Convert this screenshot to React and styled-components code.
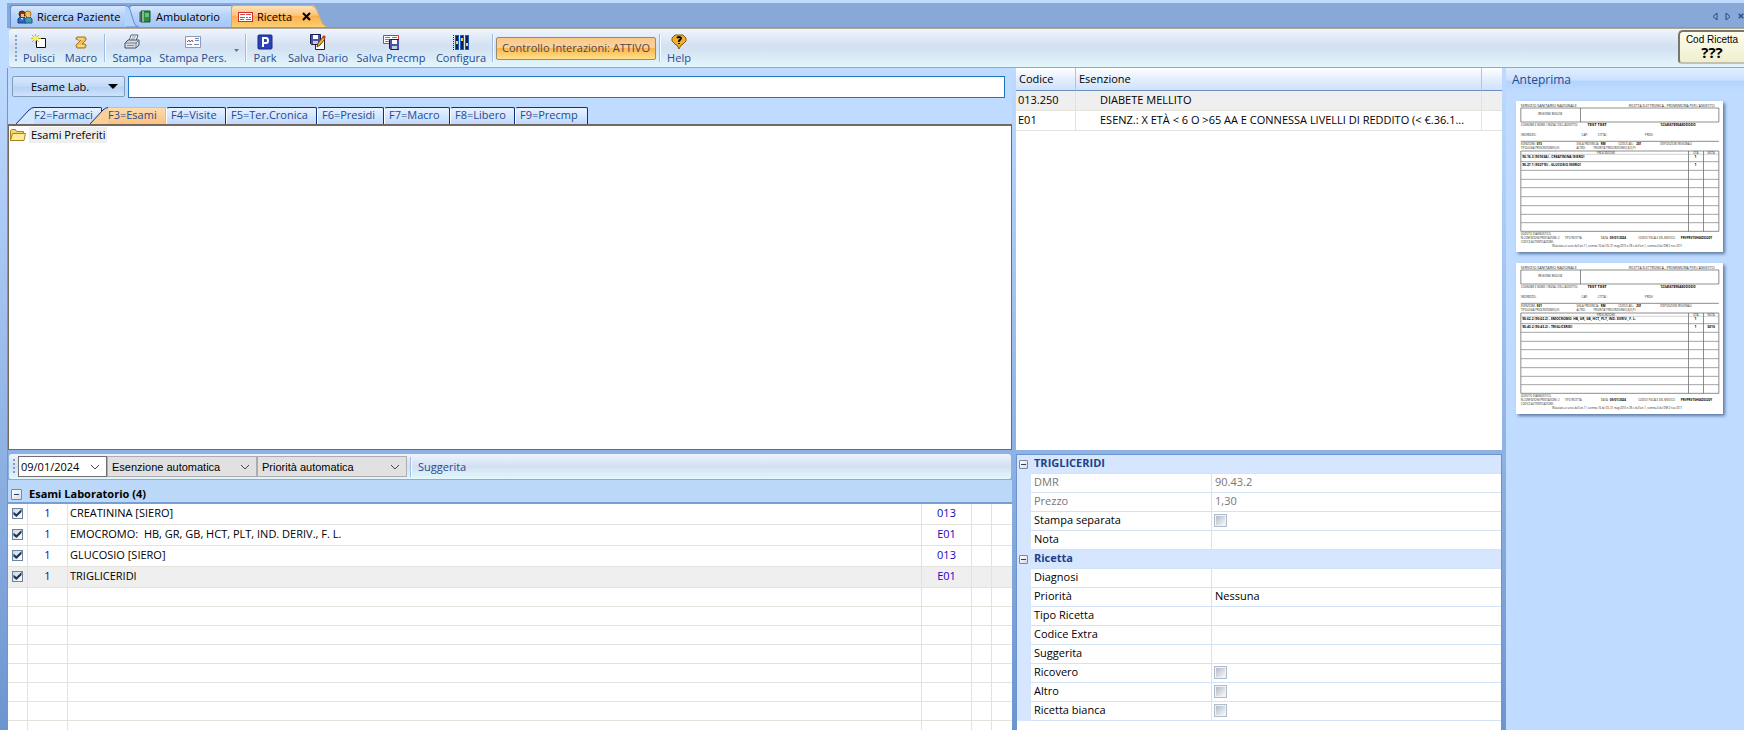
import React, { useState } from "react";
import styled, { createGlobalStyle } from "styled-components";

const GlobalStyle = createGlobalStyle`
  * {
    box-sizing: border-box;
  }

  body {
    margin: 0;
    background: #bfdbff;
    color: #000;
    font-family: "Open Sans", "Noto Sans", sans-serif;
    font-size: 11px;
    line-height: 16px;
  }

  button, input, select {
    font: inherit;
    color: inherit;
    margin: 0;
  }

  button {
    padding: 0;
    border: 0;
    background: none;
    white-space: nowrap;
  }
`;

const Page = styled.div`
  display: flex;
  flex-direction: column;
  height: 100vh;
  overflow: hidden;
  padding-left: 7px;
  background: linear-gradient(#bfdbff 60px, #8fb2e4 450px, #6c95cf);
`;

const TabStrip = styled.div`
  display: flex;
  align-items: flex-end;
  height: 25px;
  flex: none;
  margin-top: 3px;
  padding-left: 3px;
  background: #88a9d8;
  border-bottom: 1px solid #6f9bd8;
`;

const WindowTab = styled.button`
  display: flex;
  align-items: center;
  gap: 4px;
  height: 22px;
  width: ${({ $width }) => $width}px;
  padding-left: ${({ $indent }) => $indent || 6}px;
  border: 1px solid ${({ $active }) => ($active ? "#c6ab7c" : "#5f8cca")};
  border-right: 0;
  border-bottom: 0;
  border-radius: 3px 0 0 0;
  background: ${({ $active }) =>
    $active
      ? "linear-gradient(#fde3b8, #fcc47c 45%, #fbaf4e 50%, #fdd06f)"
      : "linear-gradient(#d5e6fd, #b3d1fb 50%, #a5c8fa)"};
`;

const TabEdge = styled.svg`
  display: block;
  flex: none;
  position: relative;
  z-index: 1;
  margin-right: ${({ $overlap }) => -$overlap}px;
`;

const TabClose = styled.span`
  margin-left: 6px;
  line-height: 0;
`;

const StripButtons = styled.div`
  display: flex;
  gap: 7px;
  align-items: center;
  height: 22px;
  margin-left: auto;

  button {
    line-height: 0;
  }
`;

const Toolbar = styled.div`
  display: flex;
  align-items: center;
  flex: none;
  height: 40px;
  padding-left: 6px;
  margin-left: 2px;
  border-top: 1px solid #b3a99b;
  border-bottom: 1px solid #78b1dd;
  border-radius: 3px 0 0 3px;
  background: linear-gradient(#f0f5fd, #d3e0f2 45%, #d5e5f4 60%, #e4f6fc);
  color: #254a92;
`;

const Grip = styled.div`
  width: 2px;
  height: ${({ $height }) => $height}px;
  flex: none;
  background: repeating-linear-gradient(#7f9fd4 0 2px, transparent 2px 4px);
`;

const ToolButton = styled.button`
  display: flex;
  flex-direction: column;
  align-items: center;
  gap: 1px;
  width: ${({ $width }) => $width}px;
  padding-top: 2px;
  line-height: 14px;
`;

const Divider = styled.div`
  width: 1px;
  height: ${({ $height }) => $height}px;
  margin-left: ${({ $space }) => $space || 0}px;
  flex: none;
  background: #9dbce6;
  box-shadow: 1px 0 #f5faff;
`;

const MenuArrow = styled.button`
  width: 18px;
  height: 28px;
`;

const ToggleButton = styled.button`
  height: 23px;
  width: 160px;
  margin: 0 3px;
  border: 1px solid #9c8a69;
  border-radius: 2px;
  background: linear-gradient(#f8c887, #fdd299 45%, #fcb64f 50%, #fee08b);
  color: #4b4654;
`;

const CodeBox = styled.button`
  align-self: flex-start;
  display: flex;
  flex-direction: column;
  align-items: center;
  width: 66px;
  height: 34px;
  margin-top: 1px;
  margin-left: auto;
  padding-top: 1px;
  border: 2px solid #77776b;
  border-right: 0;
  border-bottom-color: #c2c2ae;
  border-radius: 5px 0 0 4px;
  background: linear-gradient(#fdfdec, #efefcf);
  color: #000;
  font-family: "Liberation Sans", Arial, sans-serif;
  font-size: 10px;
  line-height: 13px;
`;

const CodeValue = styled.strong`
  font-family: "Open Sans", sans-serif;
  font-size: 15px;
`;

const Columns = styled.div`
  display: grid;
  grid-template-columns: minmax(0, 1fr) 486px 238px;
  column-gap: 4px;
  flex: 1;
  min-height: 0;
  border-left: 1px solid #8a91a5;
`;

const Column = styled.div`
  display: flex;
  flex-direction: column;
  min-height: 0;
  min-width: 0;
`;

const SearchArea = styled.div`
  background: #bfdbff;
  flex: none;
`;

const SearchRow = styled.div`
  display: flex;
  gap: 3px;
  padding: 8px 7px 9px 4px;
`;

const TypeButton = styled.button`
  display: flex;
  align-items: center;
  justify-content: space-between;
  width: 113px;
  height: 21px;
  padding: 0 6px 0 18px;
  border: 1px solid #7f9db9;
  border-radius: 2px;
  background: linear-gradient(#d8e8fc, #c2daf8 50%, #b7d2f5 55%, #cfe2fa);
`;

const SearchInput = styled.input`
  flex: 1;
  height: 22px;
  min-width: 0;
  padding: 0 3px;
  border: 1px solid #2077bd;
  background: #fff;
  outline: 0;
`;

const CategoryTabs = styled.div`
  display: flex;
  height: 17px;
  padding-left: 8px;
`;

const CategoryTab = styled.button`
  width: ${({ $width }) => $width}px;
  height: 17px;
  padding-left: ${({ $slanted }) => ($slanted ? 0 : 4)}px;
  padding-bottom: 2px;
  text-align: left;
  line-height: 14px;
  border: 1px solid ${({ $active }) => ($active ? "#e9b87a" : "#0d2f86")};
  border-left: ${({ $slanted }) => ($slanted ? "0" : "1px solid #fff")};
  border-bottom: 0;
  border-radius: ${({ $slanted }) => ($slanted ? "0 2px 0 0" : "3px 2px 0 0")};
  background: ${({ $active }) =>
    $active ? "linear-gradient(#fbdcae, #fbc27d)" : "linear-gradient(#eaf3ff, #bed9fe)"};
  color: #254a92;
`;

const Slant = styled.svg`
  display: block;
  flex: none;
  position: relative;
  margin-left: ${({ $overlap }) => -$overlap}px;
`;

const Tree = styled.div`
  flex: none;
  height: 326px;
  padding: 0 1px;
  border: 1px solid #75685f;
  border-top-width: 2px;
  background: #fff;
`;

const TreeItem = styled.button`
  display: flex;
  align-items: center;
  gap: 3px;
  height: 18px;
`;

const TreeLabel = styled.span`
  padding: 0 2px;
  background: #efefef;
`;

const FilterBar = styled.div`
  display: flex;
  align-items: center;
  flex: none;
  height: 26px;
  margin: 4px 1px 0;
  padding-left: 4px;
  border-bottom: 1px solid #7fb1dd;
  border-radius: 3px;
  background: linear-gradient(#eef4fd, #d3e0f2 50%, #e2f8fc);
`;

const Field = styled.label`
  display: grid;
  grid-template-columns: 1fr 16px;
  align-items: center;
  width: ${({ $width }) => $width}px;
  height: 21px;
  margin-left: ${({ $indent }) => ($indent ? 3 : 0)}px;
  border: 1px solid ${({ $white }) => ($white ? "#6f6f6f" : "#adadad")};
  background: ${({ $white }) => ($white ? "#fff" : "#e1e1e1")};

  input, select {
    grid-area: 1 / 1 / 2 / 3;
    width: 100%;
    height: 19px;
    padding: 0 ${({ $white }) => ($white ? 2 : 4)}px;
    border: 0;
    outline: 0;
    background: none;
    appearance: none;
    font-family: ${({ $white }) => ($white ? "inherit" : '"Liberation Sans", Arial, sans-serif')};
  }

  svg {
    grid-area: 1 / 2 / 2 / 3;
    pointer-events: none;
  }
`;

const TextButton = styled.button`
  padding: 0 7px;
  color: #254a92;
`;

const GroupHeader = styled.div`
  display: flex;
  align-items: center;
  gap: 7px;
  flex: none;
  height: 24px;
  padding: 6px 0 0 3px;
  border-bottom: 2px solid #769fd5;
  background: #bbd8f9;
  font-weight: bold;
`;

const Scroller = styled.div`
  flex: 1;
  min-height: 0;
  overflow: hidden;
  background: #fff;
`;

const ExamTable = styled.table`
  width: 100%;
  table-layout: fixed;
  border-collapse: separate;
  border-spacing: 0;

  td {
    height: 19px;
    padding: 0 2px;
    line-height: 16px;
    border-right: 1px solid #e3e3dc;
    border-bottom: 1px solid #e3e3dc;
    white-space: pre;
  }

  td:last-child {
    border-right: 0;
  }
`;

const ExamRow = styled.tr`
  background: ${({ $selected }) => ($selected ? "#efefef" : "#fff")};

  && td {
    height: 21px;
    padding-bottom: 2px;
  }
`;

const BlueCell = styled.td`
  color: #1404c4;
  text-align: center;
`;

const Check = styled.input`
  appearance: none;
  display: block;
  width: ${({ $large }) => ($large ? 13 : 11)}px;
  height: ${({ $large }) => ($large ? 13 : 11)}px;
  border: 1px solid ${({ $large }) => ($large ? "#aebccd" : "#6b84a0")};
  background: ${({ $large }) =>
    $large
      ? "linear-gradient(135deg, #b4bac5, #f7f8fa) content-box, #eef1f6"
      : "linear-gradient(135deg, #cdd5df, #fff)"};
  padding: ${({ $large }) => ($large ? 1 : 0)}px;
  margin: 0 0 0 ${({ $large }) => ($large ? -1 : 2)}px;

  &:checked::before {
    content: "";
    display: block;
    width: 9px;
    height: 9px;
    background: #1e3550;
    clip-path: polygon(5% 35%, 38% 60%, 95% 5%, 95% 40%, 38% 95%, 5% 68%);
  }
`;

const CodeTable = styled.table`
  width: 100%;
  table-layout: fixed;
  border-spacing: 0;

  th {
    height: 23px;
    padding: 0 3px;
    font-weight: normal;
    text-align: left;
    border-right: 1px solid #a9c6ea;
    border-bottom: 1px solid #6d90c4;
    background: linear-gradient(#fff, #e4effd 50%, #cfe2fb);
  }

  td {
    height: 20px;
    padding: 0 2px 2px;
    white-space: nowrap;
    border-right: 1px solid #e3e3dc;
    border-bottom: 1px solid #e3e3dc;
  }

  td + td {
    padding-left: 24px;
  }

  th:last-child, td:last-child {
    border-right: 0;
  }
`;

const CodeRow = styled.tr`
  background: ${({ $selected }) => ($selected ? "#efefef" : "#fff")};
`;

const CodePanel = styled.div`
  flex: none;
  height: 382px;
  overflow: hidden;
  background: #fff;
`;

const Properties = styled.div`
  flex: 1;
  min-height: 0;
  margin-top: 4px;
  overflow: hidden;
  border: 1px solid #6b93cf;
  border-bottom: 0;
  background: #fff;
`;

const PropertyTable = styled.table`
  width: 100%;
  table-layout: fixed;
  border-spacing: 0;

  th, td {
    height: 19px;
    padding: 0 3px 2px;
    text-align: left;
    font-weight: normal;
    border-bottom: 1px solid #d3e3f6;
  }

  td {
    border-left: 1px solid #d3e3f6;
  }
`;

const Gutter = styled.td`
  && {
    padding: 0 2px;
    border: 0;
    background: #d5e6fe;
  }
`;

const GroupCell = styled.th`
  && {
    background: #d5e6fe;
    color: #1d428a;
    font-weight: bold;
  }
`;

const PropertyRow = styled.tr`
  color: ${({ $readOnly }) => ($readOnly ? "#777" : "#000")};
`;

const Collapse = styled.button`
  display: block;
  width: ${({ $size }) => $size}px;
  height: ${({ $size }) => $size}px;
  border: 1px solid #7b8796;
  border-radius: 1px;
  background: linear-gradient(#26406e, #26406e) center / 5px 1px no-repeat,
    linear-gradient(135deg, #fff, #d5dce8);
`;

const Preview = styled.aside`
  background: #bfdbff;
`;

const PreviewTitle = styled.h2`
  height: 24px;
  margin: 0 0 9px;
  padding-left: 6px;
  color: #254a92;
  font-size: 12px;
  font-weight: normal;
  line-height: 24px;
  background: linear-gradient(#e0eeff, #cce1ff 50%, #b3d3fd 55%, #bfdbff);
`;

const Sheet = styled.svg`
  display: block;
  width: 207px;
  height: 151px;
  margin: 0 0 11px 10px;
  background: #fff;
  box-shadow: 2px 2px 3px #5d7ba5;
`;

const PatientsIcon = () => (
  <svg width="16" height="14" viewBox="0 0 16 14">
    <path d="M1 13V9l2-2h4l2 2v4z" fill="#2b6cc4" stroke="#143a7a" />
    <path d="M8 13V9l2-2h3l2 2v4z" fill="#3f9bb0" stroke="#1d5a68" />
    <circle cx="5" cy="4" r="3" fill="#7a3b16" stroke="#4a220d" />
    <circle cx="11" cy="4" r="3" fill="#f0c04a" stroke="#a86f12" />
    <path d="M4 4h3v3H4zM10 4h3v3h-3z" fill="#f3b98a" />
    <path d="M4 8l1 2 1-2z" fill="#fff" />
  </svg>
);

const BookIcon = () => (
  <svg width="14" height="14" viewBox="0 0 14 14">
    <path d="M3 1h9v11H3z" fill="#2f8c45" stroke="#175328" />
    <path d="M5 1v11" stroke="#c8f0cc" />
    <path d="M7 4h4M7 6h4" stroke="#b5e7bb" />
    <path d="M1 3h3M1 5h3M1 7h3M1 9h3M1 11h3" stroke="#444" />
  </svg>
);

const FormIcon = () => (
  <svg width="16" height="12" viewBox="0 0 16 12" shapeRendering="crispEdges">
    <path d="M.5 1.500h15v9H.5z" fill="#fff" stroke="#c9232b" />
    <path d="M2 3.500h5M9 3.500h5M2 6.500h5M9 6.500h2M12 6.500h2M2 8.500h4M9 8.500h5" stroke="#d83a40" />
  </svg>
);

const NewIcon = () => (
  <svg width="16" height="16" viewBox="0 0 16 16">
    <path d="M5.500 4.500h9v9h-9z" fill="#fff" stroke="#111" />
    <path d="M4.500 0v10M0 4.500h10M1 1l7 7M8 1L1 8" stroke="#c5b61b" />
    <path d="M4.500 2v5M2 4.500h5" stroke="#fff34a" strokeWidth="2" />
  </svg>
);

const ScrollIcon = () => (
  <svg width="14" height="16" viewBox="0 0 14 16">
    <path d="M3 3h8l1 1v2l-4 4h3l1 1v1l-1 2H3l-1-2v-1l5-5H4L2 5V4z" fill="#eec05a" stroke="#a5741a" />
    <path d="M4 5h5M4 12h6" stroke="#fff0b5" />
  </svg>
);

const PrinterIcon = () => (
  <svg width="16" height="16" viewBox="0 0 16 16">
    <path d="M5 7l2-6h7l-2 6z" fill="#fff" stroke="#52606f" />
    <path d="M8 3h4M7 5h4" stroke="#8293ab" />
    <path d="M1 9l3-3h11v5l-3 3H1z" fill="#d9dee6" stroke="#46515f" />
    <path d="M1 9h11v5M12 9l3-3" stroke="#6d7a8a" fill="none" />
    <path d="M3 11.500h7" stroke="#7c8aa0" />
  </svg>
);

const CardIcon = () => (
  <svg width="16" height="16" viewBox="0 0 16 16">
    <path d="M.5 2.500h15v11H.5z" fill="#f8fafd" stroke="#8c9cb8" />
    <path d="M2 8l2-2 1 2 2-2 1 2" stroke="#b8502c" fill="none" />
    <path d="M10 4.500h4M10 6.500h4M2 10.500h5M9 10.500h5" stroke="#7088b5" />
  </svg>
);

const ParkIcon = () => (
  <svg width="16" height="16" viewBox="0 0 16 16">
    <rect x="1" y="1" width="14" height="14" rx="1" fill="#2c43b8" stroke="#1a2b88" />
    <path d="M6 13V4h3q2 0 2 2.500T9 9H6" fill="none" stroke="#fff" strokeWidth="2" />
  </svg>
);

const Floppy = () => (
  <>
    <path d="M.5.5h10v10H1.500l-1-1z" fill="#4a53a8" stroke="#171c50" />
    <path d="M3 1h5v4H3z" fill="#fff" />
    <path d="M3 7h5v3H3z" fill="#c6cde2" />
  </>
);

const SaveDiaryIcon = () => (
  <svg width="16" height="16" viewBox="0 0 16 16">
    <path d="M5.500 5.500h9v10h-9z" fill="#fff" stroke="#222" />
    <Floppy />
    <path d="M7 13l1-4 5-6 2 2-5 6z" fill="#f0b43c" stroke="#6b3e0b" />
    <path d="M12 3l2-2 2 2-2 2z" fill="#c93e32" />
  </svg>
);

const SaveFormIcon = () => (
  <svg width="16" height="16" viewBox="0 0 16 16">
    <path d="M.5 1.500h15v8H.5z" fill="#fff" stroke="#d6323a" />
    <path d="M2 3.500h5M9 3.500h5M2 5.500h4M2 7.500h4" stroke="#e2575c" />
    <g transform="translate(6 5)">
      <Floppy />
    </g>
  </svg>
);

const SlidersIcon = () => (
  <svg width="16" height="16" viewBox="0 0 16 16" shapeRendering="crispEdges">
    <path d="M.5 1v15" stroke="#222" strokeDasharray="1 1" />
    <path d="M2 1h4v15H2zM7 1h4v15H7zM12 1h4v15h-4z" fill="#1d5fc0" />
    <path d="M4 2v13M9 2v13M14 2v13" stroke="#0a1f4c" strokeWidth="2" />
    <path d="M3 7h2v3H3zM8 4h2v3H8zM13 9h2v3h-2z" fill="#f5d44b" />
  </svg>
);

const HelpIcon = () => (
  <svg width="16" height="16" viewBox="0 0 16 16">
    <path d="M4 1h8l3 3v3l-4 4h-1l-2 4-2-4H5L1 7V4z" fill="#efb02e" stroke="#8a5a0c" />
    <path d="M6 4q2-2 4 0 0 1-2 3v1" fill="none" stroke="#111" strokeWidth="2" />
    <path d="M7 9h2v1H7z" fill="#111" />
  </svg>
);

const FolderIcon = () => (
  <svg width="16" height="14" viewBox="0 0 16 14">
    <path d="M.5 12.500v-10l1-1h4l1 2h7v9z" fill="#f5d56c" stroke="#a98322" />
    <path d="M.5 12.500l2-7h13l-1.500 7z" fill="#fdeb9b" stroke="#a98322" />
  </svg>
);

const Triangle = ({ width = 5, height = 3, color = "#5575ab" }) => (
  <svg width={width} height={height} viewBox="0 0 10 5" preserveAspectRatio="none">
    <path d="M0 0h10L5 5z" fill={color} />
  </svg>
);

const Chevron = () => (
  <svg width="10" height="6" viewBox="0 0 10 6">
    <path d="M1 1l4 4 4-4" fill="none" stroke="#444" />
  </svg>
);

const CloseIcon = ({ size = 9, color = "#000" }) => (
  <svg width={size} height={size} viewBox="0 0 9 9">
    <path d="M1 1l7 7M8 1L1 8" stroke={color} strokeWidth="2" />
  </svg>
);

const StripArrow = ({ flip }) => (
  <svg width="6" height="9" viewBox="0 0 6 9">
    <path d={flip ? "M1 1l4 3.500L1 8z" : "M5 1L1 4.500 5 8z"} fill="none" stroke="#254a92" />
  </svg>
);

const SheetText = ({ x, y, bold, size = 9, children }) => (
  <text
    x={x}
    y={y}
    fontSize={size}
    fontWeight={bold ? "bold" : "normal"}
    fontFamily="Open Sans, sans-serif"
    fill={bold ? "#000" : "#222"}
  >
    {children}
  </text>
);

const rowLines = [182, 208, 235, 260, 287, 314, 340, 365];

const RecipeSheet = ({ exemption, lines }) => (
  <Sheet viewBox="0 0 620 453" role="img" aria-label={`Anteprima ricetta ${exemption}`}>
    <path
      d="M14 21h594v42H14zM193 21v42M14 121h594M14 150h594v241H14zM517 150v241M562 150v241"
      fill="none"
      stroke="#555"
      strokeWidth="2"
    />
    {rowLines.map((y) => (
      <path key={y} d={`M14 ${y}h594`} stroke="#777" strokeWidth="2" />
    ))}
    <path d="M14 160h594" stroke="#777" />
    <SheetText x={14} y={18} size={11}>SERVIZIO SANITARIO NAZIONALE</SheetText>
    <SheetText x={338} y={18} size={10}>RICETTA ELETTRONICA - PROMEMORIA PER L'ASSISTITO</SheetText>
    <SheetText x={66} y={43}>REGIONE MOLISE</SheetText>
    <SheetText x={14} y={75} size={8}>COGNOME E NOME / INIZIALI DELL'ASSISTITO:</SheetText>
    <SheetText x={214} y={76} size={12} bold>TEST TEST</SheetText>
    <SheetText x={432} y={76} size={10} bold>1234567890ASDDDDD</SheetText>
    <SheetText x={14} y={106}>INDIRIZZO:</SheetText>
    <SheetText x={196} y={106}>CAP:</SheetText>
    <SheetText x={245} y={106}>CITTA':</SheetText>
    <SheetText x={386} y={106}>PROV:</SheetText>
    <SheetText x={14} y={131} size={8}>ESENZIONE:</SheetText>
    <SheetText x={62} y={131}  bold>{exemption}</SheetText>
    <SheetText x={181} y={131} size={8}>SIGLA PROVINCIA:</SheetText>
    <SheetText x={254} y={131} bold>RM</SheetText>
    <SheetText x={306} y={131} size={8}>CODICE ASL:</SheetText>
    <SheetText x={360} y={131} bold>201</SheetText>
    <SheetText x={432} y={131} size={8}>DISPOSIZIONI REGIONALI:</SheetText>
    <SheetText x={14} y={144} size={8}>TIPOLOGIA PRESCRIZIONE(S,H):</SheetText>
    <SheetText x={181} y={144} size={8}>ALTRO:</SheetText>
    <SheetText x={232} y={144} size={8}>PRIORITA' PRESCRIZIONE(U,B,D,P):</SheetText>
    <SheetText x={242} y={158} size={8}>PRESCRIZIONE</SheetText>
    <SheetText x={531} y={158} size={8}>QTA</SheetText>
    <SheetText x={574} y={158} size={8}>NOTA</SheetText>
    {lines.map(({ text, note }, index) => (
      <React.Fragment key={text}>
        <SheetText x={18} y={171 + index * 24} size={10} bold>{text}</SheetText>
        <SheetText x={535} y={171 + index * 24} size={10} bold>1</SheetText>
        {note && <SheetText x={573} y={171 + index * 24} size={10} bold>{note}</SheetText>}
      </React.Fragment>
    ))}
    <SheetText x={14} y={401} size={8}>QUESITO DIAGNOSTICO:</SheetText>
    <SheetText x={14} y={413} size={8}>N.CONFEZIONI/PRESTAZIONI: 2</SheetText>
    <SheetText x={146} y={413} size={8}>TIPO RICETTA:</SheetText>
    <SheetText x={254} y={413} size={8}>DATA:</SheetText>
    <SheetText x={281} y={413} bold>09/01/2024</SheetText>
    <SheetText x={366} y={413} size={8}>CODICE FISCALE DEL MEDICO:</SheetText>
    <SheetText x={494} y={413} bold>PRVPRV70H06Z0320Y</SheetText>
    <SheetText x={14} y={425} size={8}>CODICE AUTENTICAZIONE:</SheetText>
    <SheetText x={108} y={437} size={8}>
      Rilasciato ai sensi dell'art.11, comma 16 del DL 31 mag 2010 n.78 e dell'art.1, comma 4 del DM 2 nov 2011
    </SheetText>
  </Sheet>
);

const categories = [
  { label: "F2=Farmaci", width: 68, slanted: true },
  { label: "F3=Esami", width: 58, slanted: true },
  { label: "F4=Visite", width: 60 },
  { label: "F5=Ter.Cronica", width: 91 },
  { label: "F6=Presidi", width: 67 },
  { label: "F7=Macro", width: 66 },
  { label: "F8=Libero", width: 65 },
  { label: "F9=Precmp", width: 73 },
];

const initialExams = [
  { name: "CREATININA [SIERO]", code: "013", checked: true },
  { name: "EMOCROMO:  HB, GR, GB, HCT, PLT, IND. DERIV., F. L.", code: "E01", checked: true },
  { name: "GLUCOSIO [SIERO]", code: "013", checked: true },
  { name: "TRIGLICERIDI", code: "E01", checked: true },
];

const exemptions = [
  { code: "013.250", text: "DIABETE MELLITO" },
  { code: "E01", text: "ESENZ.: X ETÀ < 6 O >65 AA E CONNESSA LIVELLI DI REDDITO (< €.36.1..." },
];

const propertyGroups = [
  {
    title: "TRIGLICERIDI",
    rows: [
      { label: "DMR", value: "90.43.2", readOnly: true },
      { label: "Prezzo", value: "1,30", readOnly: true },
      { label: "Stampa separata", check: true },
      { label: "Nota" },
    ],
  },
  {
    title: "Ricetta",
    rows: [
      { label: "Diagnosi" },
      { label: "Priorità", value: "Nessuna" },
      { label: "Tipo Ricetta" },
      { label: "Codice Extra" },
      { label: "Suggerita" },
      { label: "Ricovero", check: true },
      { label: "Altro", check: true },
      { label: "Ricetta bianca", check: true },
    ],
  },
];

const Tool = ({ label, width, icon: Icon }) => (
  <ToolButton type="button" $width={width}>
    <Icon />
    {label}
  </ToolButton>
);

const WindowTabs = () => (
  <TabStrip>
    <WindowTab type="button" $width={115}>
      <PatientsIcon />
      Ricerca Paziente
    </WindowTab>
    <TabEdge width="14" height="22" $overlap={10}>
      <path d="M0 .5q4 0 5 4l4 13q1 4 5 4.500H0z" fill="#b5d2fb" stroke="#5f8cca" />
      <path d="M0 1v21" stroke="#b5d2fb" strokeWidth="2" />
    </TabEdge>
    <WindowTab type="button" $width={102} $indent={8}>
      <BookIcon />
      Ambulatorio
    </WindowTab>
    <WindowTab type="button" $active $width={80}>
      <FormIcon />
      Ricetta
      <TabClose>
        <CloseIcon />
      </TabClose>
    </WindowTab>
    <TabEdge width="16" height="22" $overlap={0}>
      <defs>
        <linearGradient id="active-tab" x2="0" y2="1">
          <stop offset="0" stopColor="#fde3b8" />
          <stop offset=".45" stopColor="#fcc47c" />
          <stop offset=".5" stopColor="#fbaf4e" />
          <stop offset="1" stopColor="#fdd06f" />
        </linearGradient>
      </defs>
      <path d="M0 0q4 0 6 5l5 12q2 4 5 5H0z" fill="url(#active-tab)" />
      <path d="M0 .5q4 0 6 5l5 12q2 4 5 4.500" fill="none" stroke="#c6ab7c" />
    </TabEdge>
    <StripButtons>
      <button type="button" aria-label="Scheda precedente"><StripArrow /></button>
      <button type="button" aria-label="Scheda successiva"><StripArrow flip /></button>
      <button type="button" aria-label="Chiudi"><CloseIcon size={6} color="#254a92" /></button>
    </StripButtons>
  </TabStrip>
);

const MainToolbar = () => (
  <Toolbar>
    <Grip $height={27} />
    <Tool label="Pulisci" width={44} icon={NewIcon} />
    <Tool label="Macro" width={40} icon={ScrollIcon} />
    <Divider $height={28} $space={3} />
    <Tool label="Stampa" width={54} icon={PrinterIcon} />
    <Tool label="Stampa Pers." width={68} icon={CardIcon} />
    <MenuArrow type="button" aria-label="Altre stampe">
      <Triangle />
    </MenuArrow>
    <Divider $height={28} />
    <Tool label="Park" width={38} icon={ParkIcon} />
    <Tool label="Salva Diario" width={68} icon={SaveDiaryIcon} />
    <Tool label="Salva Precmp" width={78} icon={SaveFormIcon} />
    <Tool label="Configura" width={62} icon={SlidersIcon} />
    <Divider $height={28} />
    <ToggleButton type="button" aria-pressed="true">
      Controllo Interazioni: ATTIVO
    </ToggleButton>
    <Divider $height={28} />
    <Tool label="Help" width={38} icon={HelpIcon} />
    <CodeBox type="button">
      Cod Ricetta
      <CodeValue>???</CodeValue>
    </CodeBox>
  </Toolbar>
);

const CategoryBar = () => {
  const [active, setActive] = useState("F3=Esami");

  return (
    <CategoryTabs>
      {categories.map(({ label, width, slanted }, index) => (
        <React.Fragment key={label}>
          {slanted && (
            <Slant width="18" height="17" $overlap={index ? 12 : 0}>
              <path
                d="M0 17L13 3q3-3 5-3v17z"
                fill={active === label ? "#fbcf98" : "#d5e6ff"}
              />
              <path d="M0 17L13 3q3-2.500 5-2.500" fill="none" stroke="#0d2f86" />
            </Slant>
          )}
          <CategoryTab
            type="button"
            $width={width}
            $slanted={slanted}
            $active={active === label}
            onClick={() => setActive(label)}
          >
            {label}
          </CategoryTab>
        </React.Fragment>
      ))}
    </CategoryTabs>
  );
};

const ExamList = () => {
  const [exams, setExams] = useState(initialExams);

  function toggleExam(name) {
    setExams(exams.map((exam) => (exam.name === name ? { ...exam, checked: !exam.checked } : exam)));
  }

  return (
    <Scroller>
      <ExamTable>
        <colgroup>
          <col width="20" />
          <col width="40" />
          <col />
          <col width="50" />
          <col width="20" />
          <col width="20" />
        </colgroup>
        <tbody>
          {exams.map(({ name, code, checked }, index) => (
            <ExamRow key={name} $selected={index === 3}>
              <td>
                <Check
                  type="checkbox"
                  aria-label={name}
                  checked={checked}
                  onChange={() => toggleExam(name)}
                />
              </td>
              <BlueCell>1</BlueCell>
              <td>{name}</td>
              <BlueCell>{code}</BlueCell>
              <td />
              <td />
            </ExamRow>
          ))}
          {Array.from({ length: 8 }, (_, row) => (
            <tr key={row}>
              <td />
              <td />
              <td />
              <td />
              <td />
              <td />
            </tr>
          ))}
        </tbody>
      </ExamTable>
    </Scroller>
  );
};

const PropertyGrid = () => (
  <Properties>
    <PropertyTable>
      <colgroup>
        <col width="14" />
        <col width="180" />
        <col />
      </colgroup>
      {propertyGroups.map(({ title, rows }) => (
        <tbody key={title}>
          <tr>
            <Gutter>
              <Collapse type="button" $size={9} aria-label={`Comprimi ${title}`} />
            </Gutter>
            <GroupCell colSpan={2}>{title}</GroupCell>
          </tr>
          {rows.map(({ label, value, check, readOnly }) => (
            <PropertyRow key={label} $readOnly={readOnly}>
              <Gutter />
              <th scope="row">{label}</th>
              <td>{check ? <Check type="checkbox" $large aria-label={label} /> : value}</td>
            </PropertyRow>
          ))}
        </tbody>
      ))}
    </PropertyTable>
  </Properties>
);

const App = () => {
  const [search, setSearch] = useState("");
  const [date, setDate] = useState("09/01/2024");

  return (
    <>
      <GlobalStyle />
      <Page>
        <WindowTabs />
        <MainToolbar />
        <Columns>
          <Column>
            <SearchArea>
              <SearchRow>
                <TypeButton type="button">
                  Esame Lab.
                  <Triangle width={10} height={5} color="#000" />
                </TypeButton>
                <SearchInput
                  aria-label="Cerca esame"
                  autoFocus
                  value={search}
                  onChange={(e) => setSearch(e.target.value)}
                />
              </SearchRow>
              <CategoryBar />
            </SearchArea>
            <Tree>
              <TreeItem type="button">
                <FolderIcon />
                <TreeLabel>Esami Preferiti</TreeLabel>
              </TreeItem>
            </Tree>
            <FilterBar>
              <Grip $height={15} />
              <Field $width={89} $indent $white>
                <input aria-label="Data" value={date} onChange={(e) => setDate(e.target.value)} />
                <Chevron />
              </Field>
              <Field $width={150}>
                <select aria-label="Esenzione">
                  <option>Esenzione automatica</option>
                </select>
                <Chevron />
              </Field>
              <Field $width={150}>
                <select aria-label="Priorità">
                  <option>Priorità automatica</option>
                </select>
                <Chevron />
              </Field>
              <Divider $height={20} $space={3} />
              <TextButton type="button">Suggerita</TextButton>
            </FilterBar>
            <GroupHeader>
              <Collapse type="button" $size={11} aria-label="Comprimi esami" />
              Esami Laboratorio (4)
            </GroupHeader>
            <ExamList />
          </Column>
          <Column>
            <CodePanel>
              <CodeTable>
                <colgroup>
                  <col width="60" />
                  <col />
                  <col width="20" />
                </colgroup>
                <thead>
                  <tr>
                    <th>Codice</th>
                    <th>Esenzione</th>
                    <th />
                  </tr>
                </thead>
                <tbody>
                  {exemptions.map(({ code, text }, index) => (
                    <CodeRow key={code} $selected={index === 0}>
                      <td>{code}</td>
                      <td>{text}</td>
                      <td />
                    </CodeRow>
                  ))}
                </tbody>
              </CodeTable>
            </CodePanel>
            <PropertyGrid />
          </Column>
          <Preview>
            <PreviewTitle>Anteprima</PreviewTitle>
            <RecipeSheet
              exemption="013"
              lines={[
                { text: "90.16.3 (90163A) - CREATININA [SIERO]" },
                { text: "90.27.1 (90271E) - GLUCOSIO [SIERO]" },
              ]}
            />
            <RecipeSheet
              exemption="E01"
              lines={[
                { text: "90.62.2 (90.62.2) - EMOCROMO:  HB, GR, GB, HCT, PLT, IND. DERIV., F. L." },
                { text: "90.43.2 (90.43.2) - TRIGLICERIDI", note: "3010" },
              ]}
            />
          </Preview>
        </Columns>
      </Page>
    </>
  );
};

export default App;
